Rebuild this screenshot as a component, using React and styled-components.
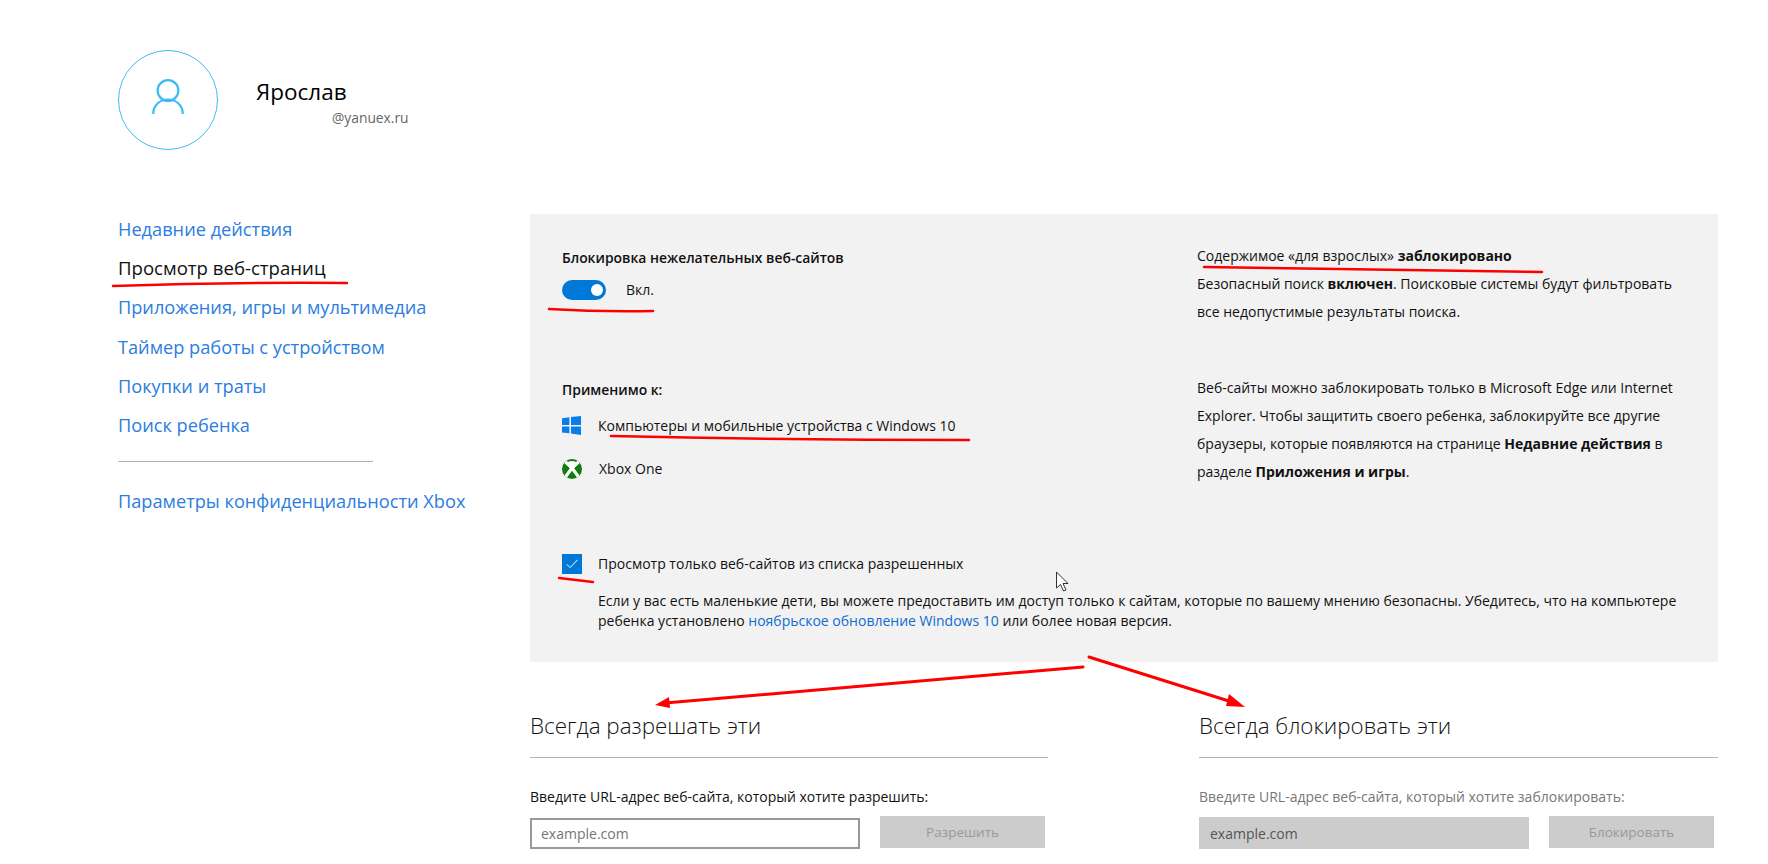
import React from "react";
import styled, { createGlobalStyle } from "styled-components";

const GlobalStyle = createGlobalStyle`
  html, body {
    margin: 0;
    background: #fff;
    color: #111;
    font-family: "Open Sans", "Noto Sans", sans-serif;
    font-size: 14px;
  }
`;

const Page = styled.div`
  position: relative;
  width: 1768px;
  height: 864px;
  overflow: hidden;
  padding: 50px 50px 0 118px;
  box-sizing: border-box;
`;

const Header = styled.header`
  display: flex;
  height: 164px;
  gap: 38px;
`;

const Avatar = styled.div`
  width: 100px;
  height: 100px;
  box-sizing: border-box;
  border: 1px solid #3bbcf4;
  border-radius: 50%;
  padding-bottom: 8px;
  display: flex;
  align-items: center;
  justify-content: center;
`;

const Identity = styled.div`
  padding-top: 28px;
`;

const Name = styled.div`
  font-size: 22.5px;
  line-height: 28px;
  font-weight: 400;
  color: #000;
`;

const Email = styled.div`
  margin-top: 3px;
  padding-left: 76px;
  font-size: 13.8px;
  line-height: 18px;
  color: #666;
`;

const Main = styled.div`
  display: grid;
  grid-template-columns: 412px 1188px;
`;

const Sidebar = styled.nav`
  display: flex;
  flex-direction: column;
`;

const NavItem = styled.a`
  display: block;
  height: 39.2px;
  line-height: 30px;
  font-size: ${p => (p.$active ? "18.6px" : "18.2px")};
  font-weight: 400;
  color: ${p => (p.$active ? "#111" : "#2b7de0")};
`;

const NavRule = styled.div`
  width: 255px;
  height: 1px;
  background: #b3b3b3;
  margin: 12px 0 24px;
`;

const Content = styled.div`
  display: flex;
  flex-direction: column;
`;

const Panel = styled.section`
  background: #f2f2f2;
  padding: 28px 32px 30px;
  height: 448px;
  box-sizing: border-box;
`;

const PanelGrid = styled.div`
  display: grid;
  grid-template-columns: 635px 1fr;
`;

const LeftCol = styled.div`
  padding-top: 6px;
`;

const Strong = styled.div`
  font-weight: 600;
  font-size: 13.9px;
  line-height: 20px;
  margin-top: ${p => p.$top || 0}px;
`;

const ToggleRow = styled.div`
  display: flex;
  align-items: center;
  gap: 20px;
  margin-top: 12px;
  line-height: 20px;
  font-size: 14px;
`;

const Toggle = styled.div`
  width: 44px;
  height: 20px;
  border-radius: 10px;
  background: #0078d7;
  position: relative;
  &::after {
    content: "";
    position: absolute;
    right: 3px;
    top: 4px;
    width: 12px;
    height: 12px;
    border-radius: 50%;
    background: #fff;
  }
`;

const DeviceRow = styled.div`
  display: flex;
  align-items: center;
  gap: 17px;
  margin-top: ${p => p.$top}px;
  height: 20px;
  font-size: 14px;
`;

const Copy = styled.p`
  margin: ${p => p.$top || 0}px 0 0;
  font-size: 14px;
  line-height: 28px;
  color: #111;
  b {
    font-weight: 700;
  }
`;

const CheckRow = styled.div`
  display: grid;
  grid-template-columns: 20px 1fr;
  column-gap: 16px;
  margin-top: 68px;
  font-size: 14px;
  line-height: 20px;
`;

const CheckBox = styled.div`
  width: 20px;
  height: 20px;
  background: #0078d7;
  display: flex;
  align-items: center;
  justify-content: center;
`;

const CheckText = styled.div`
  grid-column: 2;
  margin-top: ${p => p.$top || 0}px;
  white-space: nowrap;
`;

const Link = styled.a`
  color: #0f6cd0;
`;

const Lists = styled.div`
  display: grid;
  grid-template-columns: 518px 519px;
  column-gap: 151px;
  padding-top: 50px;
`;

const ListTitle = styled.h2`
  margin: 0;
  font-size: 22.4px;
  line-height: 28px;
  font-weight: 300;
  padding-bottom: 17px;
  border-bottom: 1px solid #b3b3b3;
`;

const FieldLabel = styled.div`
  margin-top: 29px;
  font-size: 14px;
  line-height: 20px;
  color: ${p => (p.$off ? "#777" : "#111")};
`;

const FieldRow = styled.div`
  display: flex;
  gap: 20px;
  margin-top: 9px;
  align-items: flex-start;
`;

const UrlInput = styled.div`
  width: 330px;
  height: ${p => (p.$off ? 32 : 31)}px;
  margin-top: ${p => (p.$off ? 1 : 2)}px;
  box-sizing: border-box;
  border: 2px solid ${p => (p.$off ? "#ccc" : "#999")};
  background: ${p => (p.$off ? "#ccc" : "#fff")};
  padding-left: 9px;
  line-height: ${p => (p.$off ? 29 : 27)}px;
  font-size: 14px;
  color: ${p => (p.$off ? "#555" : "#767676")};
`;

const AddButton = styled.div`
  width: 165px;
  height: 32px;
  background: #ccc;
  color: #999;
  text-align: center;
  line-height: 32px;
  font-size: 13.5px;
`;

/* red marks and the mouse pointer drawn on top of the screenshot */
const Marks = styled.svg`
  position: absolute;
  left: 0;
  top: 0;
  pointer-events: none;
`;

const Person = () => (
  <svg width="32" height="35" viewBox="0 0 32 35" fill="none" stroke="#3bbcf4" strokeWidth="2.2">
    <circle cx="16" cy="11.500" r="10.400" />
    <path d="M1.200 35c0-8.500 6.500-14.500 14.800-14.500s14.800 6 14.800 14.500" />
  </svg>
);

const WindowsLogo = () => (
  <svg width="19" height="19" viewBox="0 0 19 19" fill="#0a7ee8">
    <path d="M0 2.200l7.400-1V9H0zM9 .9L19 0v9H9zM0 10.500h7.400v6.700L0 16.400zM9 10.500h10V19L9 17.600z" />
  </svg>
);

const XboxLogo = () => (
  <svg width="20" height="22" viewBox="0 -2 20 22">
    <clipPath id="xbox-disc">
      <circle cx="10" cy="10" r="10" />
    </clipPath>
    <circle cx="10" cy="10" r="10" fill="#107c10" />
    <g clipPath="url(#xbox-disc)">
      <path fill="#fff" d="M5.500 3.200Q10 .9 14.500 3.200L10 8z" />
      <path fill="none" stroke="#fff" strokeWidth="3.200" d="M3 2.500C7 6 13.500 12 17.500 20M17 2.500C13 6 6.500 12 2.500 20" />
    </g>
  </svg>
);

const Tick = () => (
  <svg width="12" height="10" viewBox="0 0 12 10" fill="none" stroke="#fff" strokeWidth="1">
    <path d="M.7 5.200l3.400 3.400L11.300 1" />
  </svg>
);

const Annotations = () => (
  <Marks width="1768" height="864" viewBox="0 0 1768 864">
    <g fill="none" stroke="#f00" strokeWidth="2.500" strokeLinecap="round">
      <path d="M113 286Q230 282 347 283" />
      <path d="M549 309Q600 312 653 311" />
      <path d="M611 436Q790 440 969 440" />
      <path d="M1204 267Q1370 269 1542 272" />
      <path d="M559 578L593 582" />
      <path d="M1083 667L665 703" strokeWidth="3" />
      <path d="M1089 657L1232 702" strokeWidth="3" />
    </g>
    <path fill="#f00" d="M655 705L669 697L670 708z" />
    <path fill="#f00" d="M1245 707L1229 694L1226 706z" />
    <path fill="#fff" stroke="#333" strokeWidth="1" d="M1056.500 572v16l4-3.500 3 6.500 2.500-1-3-6.500h5z" />
  </Marks>
);

export default function App() {
  return (
    <>
      <GlobalStyle />
      <Page>
        <Header>
          <Avatar>
            <Person />
          </Avatar>
          <Identity>
            <Name>Ярослав</Name>
            <Email>@yanuex.ru</Email>
          </Identity>
        </Header>
        <Main>
          <Sidebar>
            <NavItem>Недавние действия</NavItem>
            <NavItem $active>Просмотр веб-страниц</NavItem>
            <NavItem>Приложения, игры и мультимедиа</NavItem>
            <NavItem>Таймер работы с устройством</NavItem>
            <NavItem>Покупки и траты</NavItem>
            <NavItem>Поиск ребенка</NavItem>
            <NavRule />
            <NavItem>Параметры конфиденциальности Xbox</NavItem>
          </Sidebar>
          <Content>
            <Panel>
              <PanelGrid>
                <LeftCol>
                  <Strong>Блокировка нежелательных веб-сайтов</Strong>
                  <ToggleRow>
                    <Toggle />
                    Вкл.
                  </ToggleRow>
                  <Strong $top={80}>Применимо к:</Strong>
                  <DeviceRow $top={15}>
                    <WindowsLogo />
                    Компьютеры и мобильные устройства с Windows 10
                  </DeviceRow>
                  <DeviceRow $top={23}>
                    <XboxLogo />
                    Xbox One
                  </DeviceRow>
                </LeftCol>
                <div>
                  <Copy>
                    Содержимое «для взрослых» <b>заблокировано</b>
                    <br />
                    Безопасный поиск <b>включен</b>. Поисковые системы будут фильтровать
                    <br />
                    все недопустимые результаты поиска.
                  </Copy>
                  <Copy $top={48}>
                    Веб-сайты можно заблокировать только в Microsoft Edge или Internet
                    <br />
                    Explorer. Чтобы защитить своего ребенка, заблокируйте все другие
                    <br />
                    браузеры, которые появляются на странице <b>Недавние действия</b> в
                    <br />
                    разделе <b>Приложения и игры</b>.
                  </Copy>
                </div>
              </PanelGrid>
              <CheckRow>
                <CheckBox>
                  <Tick />
                </CheckBox>
                <CheckText>Просмотр только веб-сайтов из списка разрешенных</CheckText>
                <CheckText $top={17}>
                  Если у вас есть маленькие дети, вы можете предоставить им доступ только к сайтам, которые по вашему мнению безопасны. Убедитесь, что на компьютере
                  <br />
                  ребенка установлено <Link>ноябрьское обновление Windows 10</Link> или более новая версия.
                </CheckText>
              </CheckRow>
            </Panel>
            <Lists>
              <div>
                <ListTitle>Всегда разрешать эти</ListTitle>
                <FieldLabel>Введите URL-адрес веб-сайта, который хотите разрешить:</FieldLabel>
                <FieldRow>
                  <UrlInput>example.com</UrlInput>
                  <AddButton>Разрешить</AddButton>
                </FieldRow>
              </div>
              <div>
                <ListTitle>Всегда блокировать эти</ListTitle>
                <FieldLabel $off>Введите URL-адрес веб-сайта, который хотите заблокировать:</FieldLabel>
                <FieldRow>
                  <UrlInput $off>example.com</UrlInput>
                  <AddButton>Блокировать</AddButton>
                </FieldRow>
              </div>
            </Lists>
          </Content>
        </Main>
        <Annotations />
      </Page>
    </>
  );
}
